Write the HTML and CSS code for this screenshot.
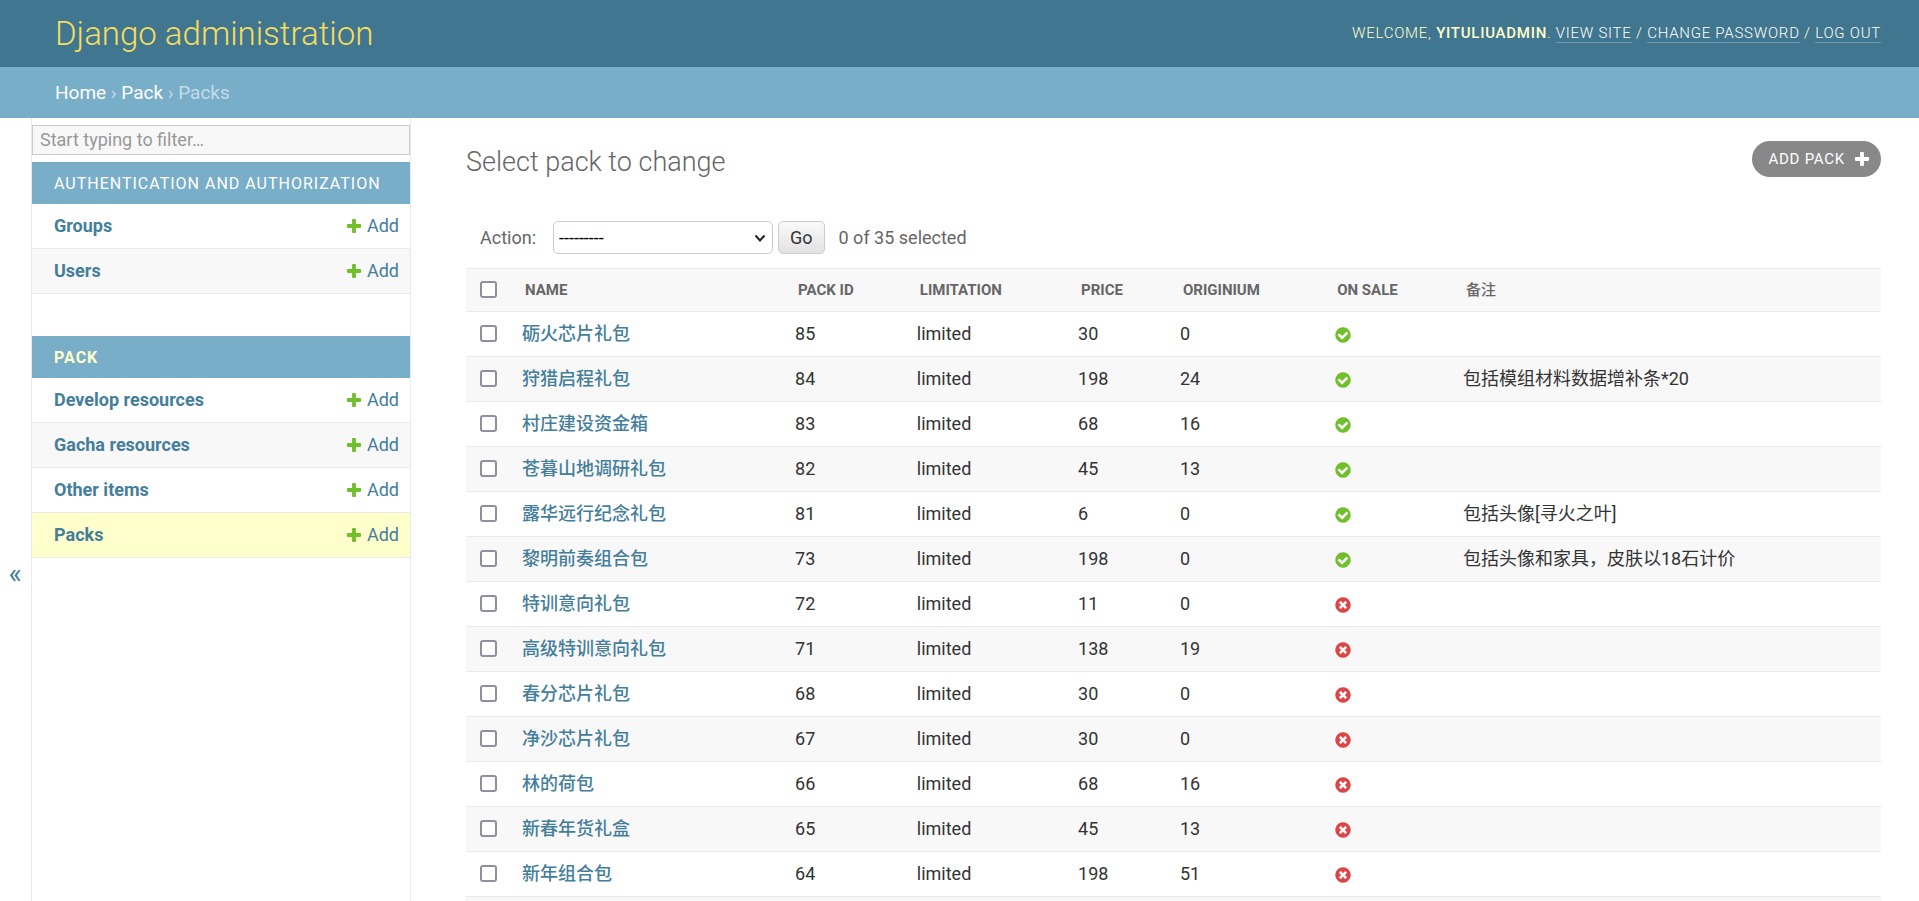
FILE: index.html
```html
<!DOCTYPE html>
<html lang="zh-CN">
<head>
<meta charset="utf-8">
<title>Select pack to change | Django site admin</title>
<link rel="stylesheet" href="styles.css">
</head>
<body>
<svg class="sprite" aria-hidden="true">
  <symbol id="plus" viewBox="0 0 1792 1792"><path d="M1600 796v192q0 40-28 68t-68 28h-416v416q0 40-28 68t-68 28h-192q-40 0-68-28t-28-68v-416h-416q-40 0-68-28t-28-68v-192q0-40 28-68t68-28h416v-416q0-40 28-68t68-28h192q40 0 68 28t28 68v416h416q40 0 68 28t28 68z"/></symbol>
  <symbol id="yes" viewBox="0 0 1792 1792"><path d="M1412 734q0-28-18-46l-91-90q-19-19-45-19t-45 19l-408 407-226-226q-19-19-45-19t-45 19l-91 90q-18 18-18 46 0 27 18 45l362 362q19 19 45 19 27 0 46-19l543-543q18-18 18-45zm252 162q0 209-103 385.5t-279.5 279.5-385.5 103-385.5-103-279.5-279.5-103-385.5 103-385.5 279.5-279.5 385.5-103 385.5 103 279.5 279.5 103 385.5z"/></symbol>
  <symbol id="no" viewBox="0 0 1792 1792"><path d="M1277 1122q0-26-19-45l-181-181 181-181q19-19 19-45 0-27-19-46l-90-90q-19-19-46-19-26 0-45 19l-181 181-181-181q-19-19-45-19-27 0-46 19l-90 90q-19 19-19 46 0 26 19 45l181 181-181 181q-19 19-19 45 0 27 19 46l90 90q19 19 46 19 26 0 45-19l181-181 181 181q19 19 45 19 27 0 46-19l90-90q19-19 19-46zm387-226q0 209-103 385.5t-279.5 279.5-385.5 103-385.5-103-279.5-279.5-103-385.5 103-385.5 279.5-279.5 385.5-103 385.5 103 279.5 279.5 103 385.5z"/></symbol>
</svg>
<div class="container">
  <header class="header">
    <a class="site-name" href="#">Django administration</a>
    <div class="user-tools">Welcome, <strong>yituliuadmin</strong>. <a href="#">View site</a> / <a href="#">Change password</a> / <a href="#">Log out</a></div>
  </header>
  <nav class="breadcrumbs" aria-label="Breadcrumbs"><a href="#">Home</a> › <a href="#">Pack</a> › Packs</nav>
  <div class="main">
    <button class="toggle" type="button" aria-label="Toggle navigation">«</button>
    <nav class="sidebar" aria-label="Sidebar">
      <input class="filter" type="search" placeholder="Start typing to filter…" aria-label="Filter navigation items">
      <section class="module">
        <h2 class="caption"><a href="#">Authentication and Authorization</a></h2>
        <ul class="models">
          <li class="model"><a class="model-name" href="#">Groups</a><a class="add" href="#"><svg class="icon"><use href="#plus"/></svg>Add</a></li>
          <li class="model"><a class="model-name" href="#">Users</a><a class="add" href="#"><svg class="icon"><use href="#plus"/></svg>Add</a></li>
        </ul>
      </section>
      <section class="module">
        <h2 class="caption caption-current"><a href="#">Pack</a></h2>
        <ul class="models">
          <li class="model"><a class="model-name" href="#">Develop resources</a><a class="add" href="#"><svg class="icon"><use href="#plus"/></svg>Add</a></li>
          <li class="model"><a class="model-name" href="#">Gacha resources</a><a class="add" href="#"><svg class="icon"><use href="#plus"/></svg>Add</a></li>
          <li class="model"><a class="model-name" href="#">Other items</a><a class="add" href="#"><svg class="icon"><use href="#plus"/></svg>Add</a></li>
          <li class="model model-current"><a class="model-name" href="#">Packs</a><a class="add" href="#"><svg class="icon"><use href="#plus"/></svg>Add</a></li>
        </ul>
      </section>
    </nav>
    <main class="content">
      <div class="title-row">
        <h1 class="title">Select pack to change</h1>
        <a class="add-button" href="#">Add pack<svg class="icon"><use href="#plus"/></svg></a>
      </div>
      <form class="changelist">
        <div class="actions">
          <label class="action-label" for="action">Action:</label>
          <span class="select-wrap">
            <select class="action-select" id="action"><option>---------</option><option>Delete selected packs</option></select>
            <svg class="chevron" viewBox="0 0 12 8"><path d="M1.500 1.500L6 6.500L10.500 1.500"/></svg>
          </span>
          <button class="go" type="button">Go</button>
          <span class="counter">0 of 35 selected</span>
        </div>
        <table class="results">
          <colgroup><col class="col-check"><col class="col-name"><col class="col-id"><col class="col-limit"><col class="col-price"><col class="col-orig"><col class="col-sale"><col></colgroup>
          <thead>
            <tr><th class="check"><input type="checkbox" aria-label="Select all"></th><th>Name</th><th>Pack ID</th><th>Limitation</th><th>Price</th><th>Originium</th><th>On sale</th><th class="note-head">备注</th></tr>
          </thead>
          <tbody>
            <tr><td class="check"><input type="checkbox" aria-label="85"></td><th scope="row"><a href="#">砺火芯片礼包</a></th><td>85</td><td>limited</td><td>30</td><td>0</td><td><svg class="icon yes"><use href="#yes"/></svg></td><td></td></tr>
            <tr><td class="check"><input type="checkbox" aria-label="84"></td><th scope="row"><a href="#">狩猎启程礼包</a></th><td>84</td><td>limited</td><td>198</td><td>24</td><td><svg class="icon yes"><use href="#yes"/></svg></td><td>包括模组材料数据增补条*20</td></tr>
            <tr><td class="check"><input type="checkbox" aria-label="83"></td><th scope="row"><a href="#">村庄建设资金箱</a></th><td>83</td><td>limited</td><td>68</td><td>16</td><td><svg class="icon yes"><use href="#yes"/></svg></td><td></td></tr>
            <tr><td class="check"><input type="checkbox" aria-label="82"></td><th scope="row"><a href="#">苍暮山地调研礼包</a></th><td>82</td><td>limited</td><td>45</td><td>13</td><td><svg class="icon yes"><use href="#yes"/></svg></td><td></td></tr>
            <tr><td class="check"><input type="checkbox" aria-label="81"></td><th scope="row"><a href="#">露华远行纪念礼包</a></th><td>81</td><td>limited</td><td>6</td><td>0</td><td><svg class="icon yes"><use href="#yes"/></svg></td><td>包括头像[寻火之叶]</td></tr>
            <tr><td class="check"><input type="checkbox" aria-label="73"></td><th scope="row"><a href="#">黎明前奏组合包</a></th><td>73</td><td>limited</td><td>198</td><td>0</td><td><svg class="icon yes"><use href="#yes"/></svg></td><td>包括头像和家具，皮肤以18石计价</td></tr>
            <tr><td class="check"><input type="checkbox" aria-label="72"></td><th scope="row"><a href="#">特训意向礼包</a></th><td>72</td><td>limited</td><td>11</td><td>0</td><td><svg class="icon no"><use href="#no"/></svg></td><td></td></tr>
            <tr><td class="check"><input type="checkbox" aria-label="71"></td><th scope="row"><a href="#">高级特训意向礼包</a></th><td>71</td><td>limited</td><td>138</td><td>19</td><td><svg class="icon no"><use href="#no"/></svg></td><td></td></tr>
            <tr><td class="check"><input type="checkbox" aria-label="68"></td><th scope="row"><a href="#">春分芯片礼包</a></th><td>68</td><td>limited</td><td>30</td><td>0</td><td><svg class="icon no"><use href="#no"/></svg></td><td></td></tr>
            <tr><td class="check"><input type="checkbox" aria-label="67"></td><th scope="row"><a href="#">净沙芯片礼包</a></th><td>67</td><td>limited</td><td>30</td><td>0</td><td><svg class="icon no"><use href="#no"/></svg></td><td></td></tr>
            <tr><td class="check"><input type="checkbox" aria-label="66"></td><th scope="row"><a href="#">林的荷包</a></th><td>66</td><td>limited</td><td>68</td><td>16</td><td><svg class="icon no"><use href="#no"/></svg></td><td></td></tr>
            <tr><td class="check"><input type="checkbox" aria-label="65"></td><th scope="row"><a href="#">新春年货礼盒</a></th><td>65</td><td>limited</td><td>45</td><td>13</td><td><svg class="icon no"><use href="#no"/></svg></td><td></td></tr>
            <tr><td class="check"><input type="checkbox" aria-label="64"></td><th scope="row"><a href="#">新年组合包</a></th><td>64</td><td>limited</td><td>198</td><td>51</td><td><svg class="icon no"><use href="#no"/></svg></td><td></td></tr>
            <tr><td class="check"></td><th scope="row"></th><td></td><td></td><td></td><td></td><td></td><td></td></tr>
          </tbody>
        </table>
      </form>
    </main>
  </div>
</div>
</body>
</html>
```
FILE: styles.css
```css
* { box-sizing: border-box; }

body {
  margin: 0;
  background: #fff;
  color: #333;
  font-family: Roboto, "Noto Sans CJK SC", sans-serif;
  font-size: 18px;
  line-height: 22px;
}

a { color: #447e9b; text-decoration: none; }
h1, h2, ul { margin: 0; padding: 0; font-weight: 400; }
ul { list-style: none; }
input, select, button { font: inherit; color: inherit; }

.sprite { position: absolute; width: 0; height: 0; }
.icon { flex: none; width: 18px; height: 18px; fill: currentColor; }

.container {
  display: flex;
  flex-direction: column;
  height: 100vh;
  overflow: hidden;
}

.header {
  flex: none;
  display: flex;
  align-items: center;
  justify-content: space-between;
  height: 67px;
  padding: 0 38px 0 55px;
  background: #417690;
  color: #ffc;
}
.site-name { color: #f5dd5d; font-size: 33px; font-weight: 300; line-height: 40px; }
.user-tools {
  padding-bottom: 2px;
  font-size: 15px;
  font-weight: 300;
  line-height: 18px;
  letter-spacing: 0.05em;
  text-transform: uppercase;
}
.user-tools strong { font-weight: 500; }
.user-tools a { color: #fff; border-bottom: 1px solid rgba(255, 255, 255, .25); }

.breadcrumbs {
  flex: none;
  padding: 15px 55px 14px;
  background: #79aec8;
  color: #c4dce8;
  font-size: 19px;
}
.breadcrumbs a { color: #fff; }

.main { flex: 1; display: flex; min-height: 0; }

.toggle {
  flex: none;
  width: 32px;
  height: 100vh;
  padding: 10px 1px 0 0;
  border: 0;
  border-right: 1px solid #eaeaea;
  background: #fff;
  color: #447e9b;
  font-size: 28px;
}

.sidebar {
  flex: none;
  width: 379px;
  padding-top: 7px;
  border-right: 1px solid #eaeaea;
}
.filter {
  display: block;
  width: 100%;
  height: 30px;
  margin-bottom: 7px;
  padding: 0 7px 2px;
  appearance: none;
  border: 1px solid #ccc;
  border-radius: 0;
  outline: 0;
  background: #f8f8f8;
}
.filter::placeholder { color: #999; opacity: 1; }

.module { margin-bottom: 42px; }
.caption {
  padding: 11px 22px 9px;
  background: #79aec8;
  font-size: 16px;
  letter-spacing: 1px;
  text-transform: uppercase;
}
.caption a { color: #fff; }
.caption-current a { color: #ffc; font-weight: 700; }
.model {
  display: flex;
  justify-content: space-between;
  padding: 11px 11px 11px 22px;
  border-bottom: 1px solid #eaeaea;
}
.model:nth-child(even) { background: #f8f8f8; }
.model-current:nth-child(n) { background: #ffc; }
.model-name { font-weight: 700; }
.add { display: flex; align-items: center; gap: 4px; }
.add .icon { color: #70bf2b; }

.content { flex: 1; min-width: 0; padding: 23px 38px 0 55px; }
.title-row { display: flex; align-items: flex-start; justify-content: space-between; }
.title { padding: 5px 0 3px; color: #666; font-size: 27px; font-weight: 300; line-height: 32px; }
.add-button {
  display: flex;
  align-items: center;
  gap: 8px;
  height: 36px;
  padding: 0 10px 0 16px;
  border-radius: 18px;
  background: #888;
  color: #fff;
  font-size: 15px;
  letter-spacing: 0.05em;
  text-transform: uppercase;
}

.actions {
  display: flex;
  align-items: center;
  height: 61px;
  margin-top: 26px;
  padding: 0 14px;
  color: #666;
}
.action-label { margin-right: 17px; }
.select-wrap { position: relative; width: 220px; }
.action-select {
  display: block;
  width: 100%;
  height: 33px;
  padding: 0 5px;
  appearance: none;
  border: 1px solid #ccc;
  border-radius: 5px;
  background: #fff;
  color: #000;
}
.chevron {
  position: absolute;
  top: 13px;
  right: 7px;
  width: 12px;
  height: 8px;
  fill: none;
  stroke: #222;
  stroke-width: 2;
}
.go {
  height: 33px;
  margin: 0 14px 0 5px;
  padding: 0 11px;
  border: 1px solid #ccc;
  border-radius: 5px;
  background: linear-gradient(#fafafa, #e2e2e2);
  color: #333;
}

.results { width: 100%; border-collapse: collapse; table-layout: fixed; }
.col-check { width: 45px; }
.col-name { width: 19.3%; }
.col-id { width: 8.6%; }
.col-limit { width: 11.4%; }
.col-price { width: 7.2%; }
.col-orig { width: 10.9%; }
.col-sale { width: 9.1%; }
.results tr { border-bottom: 1px solid #eaeaea; }
.results thead tr { height: 43px; border-top: 1px solid #eaeaea; background: #f8f8f8; }
.results tbody tr { height: 45px; }
.results tbody tr:nth-child(even) { background: #f8f8f8; }
.results td, .results th { padding: 0 11px; text-align: left; vertical-align: middle; }
.results tbody th { font-weight: 500; }
.results thead th {
  padding: 0 14px;
  color: #666;
  font-size: 15px;
  font-weight: 700;
  text-transform: uppercase;
}
.results thead .note-head { font-weight: 500; }
.results .icon { display: block; margin-top: 2px; }
.results .check { padding: 0 0 2px 14px; }
.check input {
  display: block;
  width: 17px;
  height: 17px;
  margin: 0;
  appearance: none;
  border: 2px solid #8f8f9d;
  border-radius: 3px;
  background: #fff;
}
.yes { color: #70bf2b; }
.no { color: #dd4646; }
```
